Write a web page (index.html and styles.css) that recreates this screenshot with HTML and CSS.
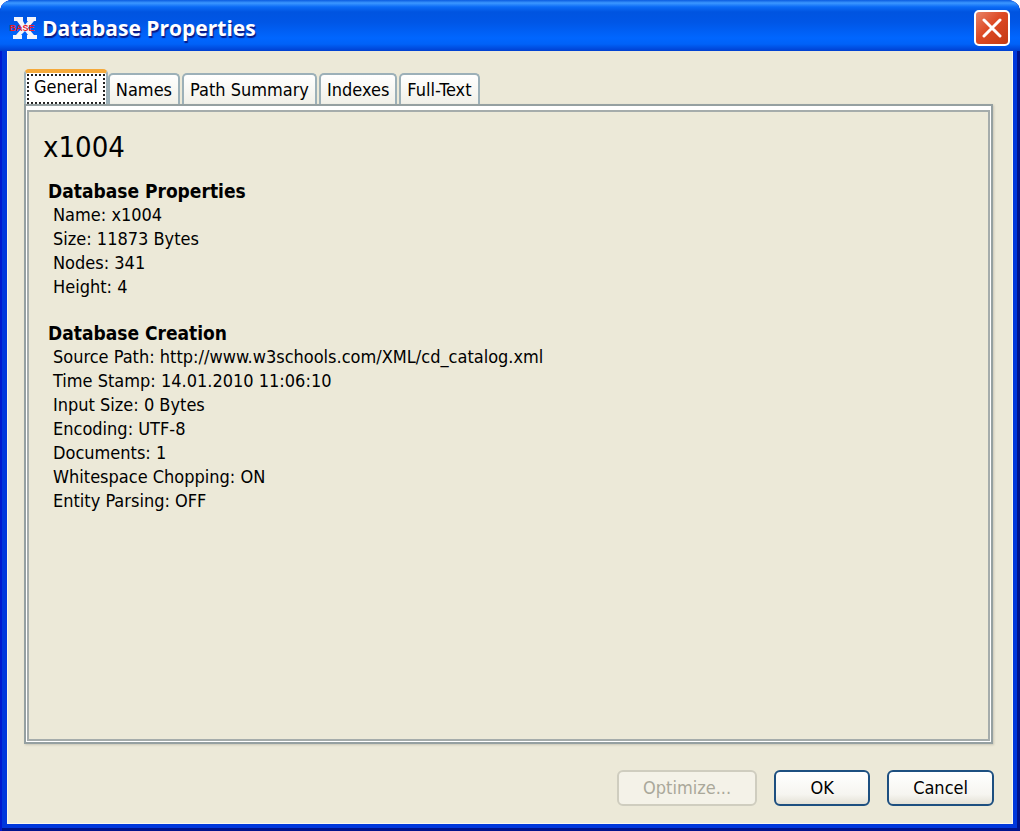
FILE: index.html
```
<!DOCTYPE html>
<html lang="en">
<head>
<meta charset="utf-8">
<title>Database Properties</title>
<link rel="stylesheet" href="styles.css">
</head>
<body>
<div class="window">
    <header class="titlebar">
        <svg class="logo" viewBox="0 0 28 22" aria-hidden="true">
            <path fill="#f4f4fa" d="M4 0h9v4l2 4 3-4h-1V0h9v4h-2l-6 7 6 7h3v4h-10v-4h1l-3-4-4 4h1v4H3v-4h3l6-7-5-7H4z"/>
            <text x="12" y="14" text-anchor="middle" class="logo-text">BASE</text>
        </svg>
        <h1 class="title">Database Properties</h1>
        <button type="button" class="close" aria-label="Close">
            <svg viewBox="0 0 20 20"><path d="M2 2l16 16M18 2L2 18" stroke="#fff" stroke-width="3" stroke-linecap="round"/></svg>
        </button>
    </header>

    <main class="content">
        <div class="tabs" role="tablist">
            <button type="button" class="tab active" role="tab" id="tab-general" aria-selected="true" aria-controls="general"><span class="focus">General</span></button>
            <button type="button" class="tab" role="tab" aria-selected="false">Names</button>
            <button type="button" class="tab" role="tab" aria-selected="false">Path Summary</button>
            <button type="button" class="tab" role="tab" aria-selected="false">Indexes</button>
            <button type="button" class="tab" role="tab" aria-selected="false">Full-Text</button>
        </div>

        <div class="panel">
            <section class="info" role="tabpanel" id="general" aria-labelledby="tab-general">
                <h2 class="name">x1004</h2>

                <h3 class="group">Database Properties</h3>
                <ul class="list">
                    <li>Name: x1004</li>
                    <li>Size: 11873 Bytes</li>
                    <li>Nodes: 341</li>
                    <li>Height: 4</li>
                </ul>

                <h3 class="group">Database Creation</h3>
                <ul class="list">
                    <li>Source Path: http://www.w3schools.com/XML/cd_catalog.xml</li>
                    <li>Time Stamp: 14.01.2010 11:06:10</li>
                    <li>Input Size: 0 Bytes</li>
                    <li>Encoding: UTF-8</li>
                    <li>Documents: 1</li>
                    <li>Whitespace Chopping: ON</li>
                    <li>Entity Parsing: OFF</li>
                </ul>
            </section>
        </div>

        <div class="buttons">
            <button type="button" class="btn wide" disabled>Optimize...</button>
            <button type="button" class="btn">OK</button>
            <button type="button" class="btn">Cancel</button>
        </div>
    </main>
</div>
</body>
</html>
```

FILE: styles.css
```
* {
    box-sizing: border-box;
}

body {
    margin: 0;
    background: #fff;
    color: #000;
    font-family: "DejaVu Sans Condensed", "DejaVu Sans", sans-serif;
    font-size: 18px;
    line-height: 24px;
}

button {
    font: inherit;
    color: inherit;
}

h1, h2, h3, ul {
    margin: 0;
    padding: 0;
}

.window {
    display: flex;
    flex-direction: column;
    min-height: 100vh;
    padding: 0 7px 7px 7px;
    border-radius: 12px 12px 0 0;
    background: #0037dc;
    box-shadow: inset 2px 0 #0019cf, inset -3px -3px #00138c;
}

/* title bar */
.titlebar {
    display: flex;
    align-items: center;
    height: 51px;
    margin: 0 -7px;
    padding: 4px 10px 0 10px;
    border-radius: 12px 12px 0 0;
    background: linear-gradient(#0a5be0 0, #3c98ff 3px, #0a6af5 7px, #0054e0 12px, #0056e6 22px, #0066ff 38px, #0062f8 44px, #003fd0 51px);
}

.logo {
    width: 28px;
    height: 22px;
    margin-right: 4px;
    overflow: visible;
}

.logo-text {
    fill: #e8202a;
    font-family: "Liberation Sans", sans-serif;
    font-size: 9px;
    font-weight: bold;
}

.title {
    flex: 1;
    color: #fff;
    font-family: "Open Sans", sans-serif;
    font-size: 21px;
    font-weight: bold;
    text-shadow: 1px 2px 1px #0a1883;
}

.close {
    display: flex;
    align-items: center;
    justify-content: center;
    width: 36px;
    height: 36px;
    padding: 0;
    border: 2px solid #fff;
    border-radius: 5px;
    background: linear-gradient(135deg, #e88468, #dd4a25 45%, #c43a12);
}

.close svg {
    width: 20px;
    height: 20px;
}

/* content */
.content {
    flex: 1;
    display: flex;
    flex-direction: column;
    padding: 18px 19px 17px 16px;
    background: #ece9d8;
    border: 1px solid #f8f6ee;
    border-top: 0;
}

.tabs {
    display: flex;
    align-items: flex-end;
    gap: 2px;
    height: 35px;
}

.tab {
    height: 31px;
    padding: 1px 6px 0 6px;
    border: 2px solid #9cb0b8;
    border-bottom: 0;
    border-radius: 5px 5px 0 0;
    background: linear-gradient(#fff, #f1f0e8);
    white-space: nowrap;
}

.tab.active {
    height: 36px;
    margin-right: -2px;
    margin-bottom: -1px;
    padding: 0 1px;
    border-top: 4px solid #f5a93a;
    background: #fff;
}

.focus {
    display: block;
    height: 30px;
    padding: 0 5px;
    border: 2px dotted #222;
    line-height: 22px;
}

.panel {
    flex: 1;
    display: flex;
    padding: 4px 1px 1px 1px;
    border: 2px solid #95a0a1;
    background: #fff;
    box-shadow: 1px 1px 2px #c9c6b6;
}

.info {
    flex: 1;
    padding: 19px 14px;
    border: 2px solid #a5acab;
    background: #ece9d8;
}

.name {
    margin-bottom: 16px;
    font-size: 29px;
    font-weight: normal;
    line-height: 32px;
}

.group {
    padding-left: 5px;
    font-size: 19px;
    font-weight: bold;
}

.list {
    margin-bottom: 22px;
    padding-left: 10px;
    list-style: none;
}

.buttons {
    display: flex;
    justify-content: flex-end;
    gap: 17px;
    margin: 26px -1px 0 0;
}

.btn {
    min-width: 96px;
    height: 36px;
    padding: 0 24px;
    border: 2px solid #1d4f80;
    border-radius: 6px;
    background: linear-gradient(#fff, #f6f5f0 70%, #e4e1d6);
}

.btn.wide {
    min-width: 140px;
}

.btn:disabled {
    border-color: #cfcdbf;
    background: #f4f2e8;
    color: #aaa89a;
}
```
